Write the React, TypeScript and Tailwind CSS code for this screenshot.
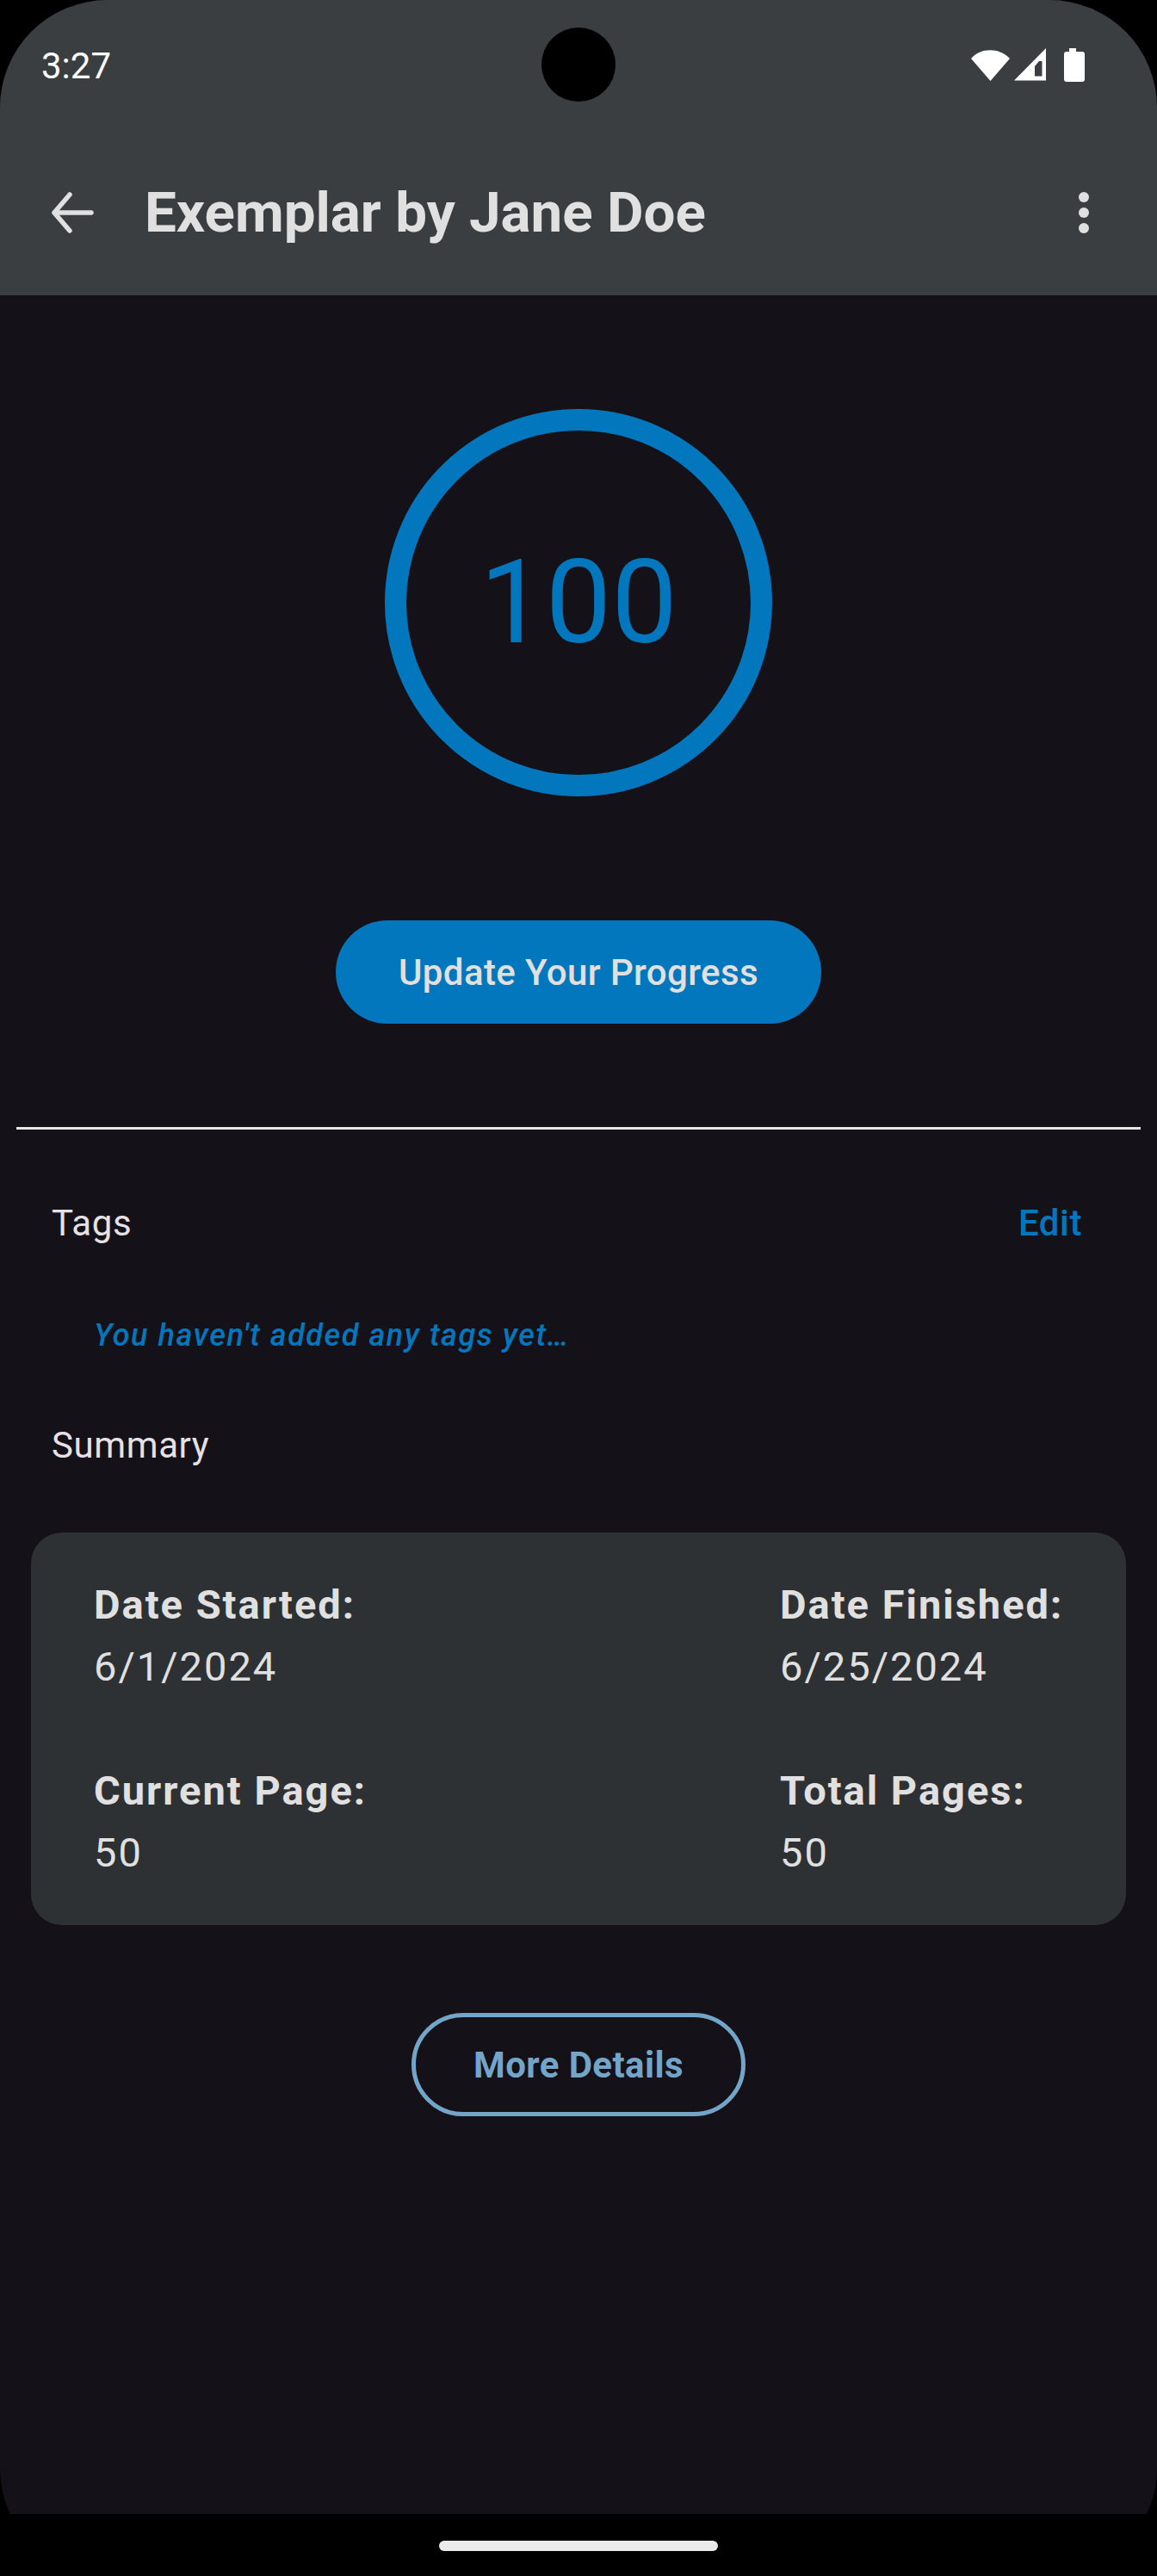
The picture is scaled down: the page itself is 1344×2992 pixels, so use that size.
const summary = [
  { label: 'Date Started:', value: '6/1/2024' },
  { label: 'Date Finished:', value: '6/25/2024' },
  { label: 'Current Page:', value: '50' },
  { label: 'Total Pages:', value: '50' }
]

function StatusIcons() {
  return (
    <svg width="134" height="42" viewBox="0 0 134 42" className="shrink-0">
      <path d="M1 14 C 12 1, 34 1, 46 14 L 23.5 40 Z" fill="#fff" />
      <path fillRule="evenodd" d="M51 39.5 L88 2 V39.5 Z M80 17 L75 23 V34.5 H83.5 V17 Z" fill="#fff" />
      <path d="M115 2 H123 V6 H130 Q133 6 133 9 V38 Q133 41 130 41 H112 Q109 41 109 38 V9 Q109 6 112 6 H115 Z" fill="#fff" />
    </svg>
  )
}

function BackIcon() {
  return (
    <svg width="50" height="48" viewBox="0 0 50 48" fill="none" stroke="#e0e0e0" strokeWidth="5.5" strokeLinecap="round" strokeLinejoin="round">
      <path d="M47 24 H4 M22 3 L4 24 L22 45" />
    </svg>
  )
}

function KebabIcon() {
  return (
    <svg width="14" height="50" viewBox="0 0 14 50" fill="#e0e0e0">
      <circle cx="7" cy="7" r="6" />
      <circle cx="7" cy="25" r="6" />
      <circle cx="7" cy="43" r="6" />
    </svg>
  )
}

export default function App() {
  return (
    <div className="relative h-[2992px] w-[1344px] overflow-hidden bg-black font-['Roboto',sans-serif]">
      <div className="flex h-full flex-col overflow-hidden rounded-[125px] bg-[#141218]">
        <header className="relative h-[343px] shrink-0 bg-[#3a3e41]">
          <div className="flex h-[150px] items-start justify-between pl-[48px] pr-[83px] pt-[54px]">
            <span className="text-[42px] leading-[46px] text-white">3:27</span>
            <StatusIcons />
          </div>
          <div className="absolute left-[629px] top-[32px] h-[86px] w-[86px] rounded-full bg-black" />
          <div className="flex items-center justify-between pl-[59px] pr-[78px] pt-[62px]">
            <div className="flex items-center gap-[59px]">
              <BackIcon />
              <h1 className="text-[65.5px] font-bold leading-[70px] text-[#e0e0e0]">Exemplar by Jane Doe</h1>
            </div>
            <KebabIcon />
          </div>
        </header>

        <main className="flex flex-1 flex-col">
          <div className="mx-auto mt-[132px] flex h-[450px] w-[450px] items-center justify-center rounded-full border-[25px] border-[#0277bd]">
            <span className="text-[136px] leading-none text-[#0277bd]">100</span>
          </div>

          <button className="mx-auto mt-[144px] h-[120px] w-[564px] rounded-full bg-[#0277bd] text-[42px] font-medium tracking-[0.4px] text-[#e0e0e0]">
            Update Your Progress
          </button>

          <div className="mx-[19px] mt-[120px] h-[3px] bg-[#e6e6e6]" />

          <div className="mt-[84px] flex items-center justify-between pl-[60px] pr-[87px]">
            <span className="text-[42px] leading-[50px] tracking-[0.6px] text-[#e6e1e5]">Tags</span>
            <span className="text-[42px] font-medium leading-[50px] tracking-[0.6px] text-[#0277bd]">Edit</span>
          </div>

          <p className="mt-[84px] pl-[109px] text-[36px] font-medium italic leading-[42px] tracking-[1.55px] text-[#0277bd]">
            You haven't added any tags yet…
          </p>

          <p className="mt-[82px] pl-[60px] text-[42px] leading-[50px] tracking-[0.6px] text-[#e6e1e5]">Summary</p>

          <section className="mx-[36px] mt-[76px] grid h-[456px] grid-cols-[797px_1fr] content-between rounded-[36px] bg-[#2e3133] pl-[73px] py-[48px]">
            {summary.map((item) => (
              <div key={item.label} className="whitespace-nowrap">
                <p className="text-[47px] font-bold leading-[72px] tracking-[2px] text-[#e0e0e0]">{item.label}</p>
                <p className="text-[47px] leading-[72px] tracking-[2px] text-[#e0e0e0]">{item.value}</p>
              </div>
            ))}
          </section>

          <button className="mx-auto mt-[102px] h-[120px] w-[388px] rounded-full border-[5px] border-[#73a5cb] text-[42px] font-bold tracking-[0.4px] text-[#73a5cb]">
            More Details
          </button>
        </main>
      </div>

      <div className="absolute inset-x-0 bottom-0 flex h-[72px] justify-center bg-black pt-[31px]">
        <div className="h-[12px] w-[324px] rounded-[6px] bg-[#ebebeb]" />
      </div>
    </div>
  )
}
